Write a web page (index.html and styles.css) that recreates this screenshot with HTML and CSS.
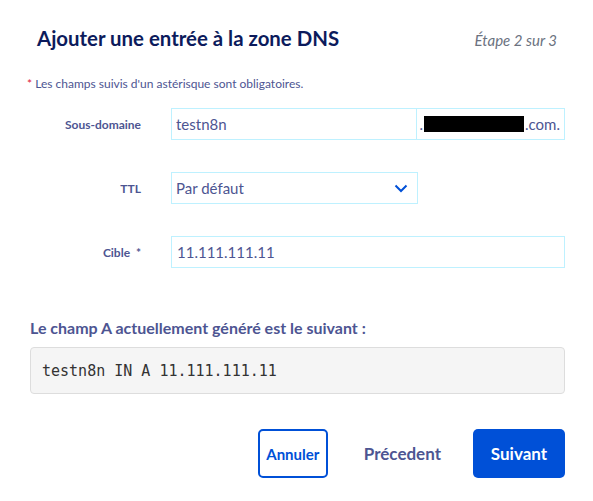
FILE: index.html
```html
<!DOCTYPE html>
<html lang="fr">
<head>
    <meta charset="UTF-8">
    <meta name="viewport" content="width=device-width, initial-scale=1.0">
    <title>Zone DNS</title>
    <link rel="stylesheet" href="styles.css">
</head>
<body>
    <div class="wizard">
        <div class="wizard-header">
            <h1>Ajouter une entrée à la zone DNS</h1>
            <span class="step">Étape 2 sur 3</span>
        </div>
        <p class="required-note"><span class="star">*</span> Les champs suivis d'un astérisque sont obligatoires.</p>

        <div class="form">
            <label class="label" for="subdomain">Sous-domaine</label>
            <div class="input-group">
                <input class="field" id="subdomain" type="text" value="testn8n">
                <span class="suffix">.<span class="masked"></span>.com.</span>
            </div>

            <label class="label" for="ttl">TTL</label>
            <div class="select">
                <span>Par défaut</span>
                <svg width="14" height="9" viewBox="0 0 14 9"><path d="M1.5 1.5 L7 7 L12.5 1.5" fill="none" stroke="#0050d7" stroke-width="2"/></svg>
            </div>

            <label class="label" for="target">Cible&nbsp; *</label>
            <input class="field wide" id="target" type="text" value="11.111.111.11">
        </div>

        <h2 class="preview-title">Le champ A actuellement généré est le suivant :</h2>
        <div class="preview">testn8n IN A 11.111.111.11</div>

        <div class="actions">
            <button class="btn btn-outline">Annuler</button>
            <button class="btn btn-link">Précedent</button>
            <button class="btn btn-primary">Suivant</button>
        </div>
    </div>
</body>
</html>
```

FILE: styles.css
```css
body {
    margin: 0;
    font-family: Lato, "Open Sans", sans-serif;
    background: #fff;
    color: #4d5592;
}
.wizard {
    padding: 26px 28px 0 30px;
}
.wizard-header {
    display: flex;
    justify-content: space-between;
    align-items: baseline;
    padding: 0 8px 0 7px;
}
.wizard-header h1 {
    margin: 0;
    font-size: 20.4px;
    font-weight: 700;
    color: #0c1b5c;
}
.step {
    font-size: 15px;
    font-style: italic;
    color: #6b7280;
}
.required-note {
    margin: 26px 0 0 -3px;
    font-size: 12px;
}
.star {
    color: #e0203a;
}
.form {
    display: grid;
    grid-template-columns: 111px 1fr;
    column-gap: 30px;
    row-gap: 32px;
    align-items: center;
    margin-top: 17px;
}
.label {
    text-align: right;
    font-size: 12px;
    font-weight: 700;
}
.input-group {
    display: flex;
    height: 32px;
    border: 1px solid #bef1ff;
    box-sizing: border-box;
}
.field {
    height: 32px;
    box-sizing: border-box;
    border: 1px solid #bef1ff;
    padding: 0 5px;
    font-family: inherit;
    font-size: 15px;
    color: #4d5592;
    outline: none;
}
.input-group .field {
    flex: 1;
    height: 30px;
    border: none;
    border-right: 1px solid #bef1ff;
    padding-left: 4px;
}
.suffix {
    display: flex;
    align-items: center;
    padding: 0 4px 0 3px;
    font-size: 15px;
}
.masked {
    display: inline-block;
    width: 100px;
    height: 16px;
    margin: 0 1px;
    background: #000;
}
.select {
    width: 247px;
    height: 32px;
    box-sizing: border-box;
    border: 1px solid #bef1ff;
    display: flex;
    align-items: center;
    justify-content: space-between;
    padding: 0 9px 0 4px;
    font-size: 15px;
}
.wide {
    width: 100%;
}
.preview-title {
    margin: 50px 0 0;
    font-size: 16px;
    font-weight: 700;
}
.preview {
    margin-top: 10px;
    height: 47px;
    box-sizing: border-box;
    display: flex;
    align-items: center;
    padding: 0 11px;
    background: #f5f5f5;
    border: 1px solid #ddd;
    border-radius: 4px;
    font-family: "DejaVu Sans Mono", monospace;
    font-size: 15px;
    color: #333;
}
.actions {
    display: flex;
    justify-content: flex-end;
    align-items: center;
    margin-top: 35px;
}
.btn {
    height: 49px;
    box-sizing: border-box;
    font-family: inherit;
    font-weight: 700;
    cursor: pointer;
    border-radius: 5px;
}
.btn-outline {
    width: 70px;
    border: 2px solid #0050d7;
    background: #fff;
    color: #0050d7;
    font-size: 15px;
    padding: 0;
}
.btn-link {
    border: none;
    background: none;
    color: #4d5592;
    font-size: 17px;
    padding: 0 32px 0 36px;
}
.btn-primary {
    width: 92px;
    border: none;
    background: #0050d7;
    color: #fff;
    font-size: 17px;
}
```
